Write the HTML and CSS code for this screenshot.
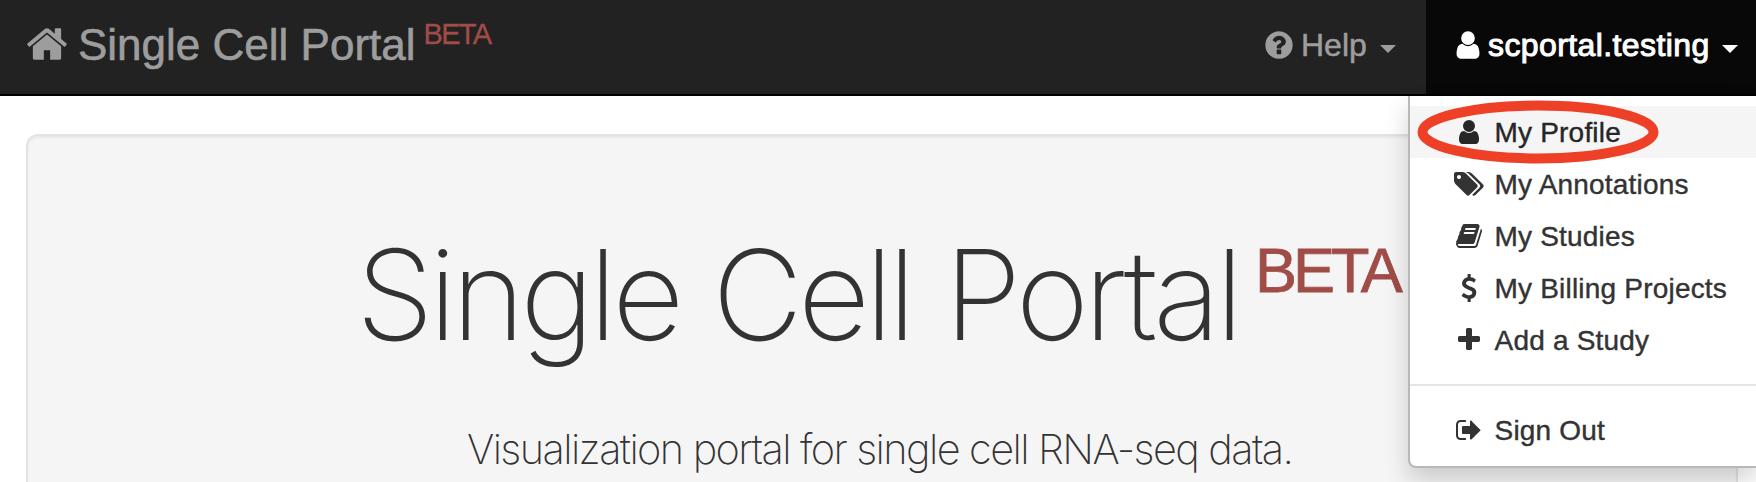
FILE: index.html
```html
<!DOCTYPE html>
<html lang="en">
<head>
<meta charset="utf-8">
<title>Single Cell Portal</title>
<link rel="stylesheet" href="styles.css">
</head>
<body>
<nav class="navbar">
  <a class="brand">
    <svg class="brand-icon" viewBox="0 0 1792 1792"><path d="M1472 992v480q0 26-19 45t-45 19h-384v-384h-256v384h-384q-26 0-45-19t-19-45v-480q0-1 .5-3t.5-3l575-474 575 474q1 2 1 6zm223-69l-62 74q-8 9-21 11h-3q-13 0-21-7l-692-577-692 577q-12 8-24 7-13-2-21-11l-62-74q-8-10-7-23.5t11-21.5l719-599q32-26 76-26t76 26l244 204v-195q0-14 9-23t23-9h192q14 0 23 9t9 23v408l219 182q10 8 11 21.5t-7 23.5z"/></svg>
    <span class="brand-name">Single Cell Portal</span>
    <span class="brand-beta">BETA</span>
  </a>
  <div class="nav-right">
    <a class="nav-item nav-help">
      <svg class="nav-icon" viewBox="0 0 1792 1792"><path d="M1024 1376v-192q0-14-9-23t-23-9h-192q-14 0-23 9t-9 23v192q0 14 9 23t23 9h192q14 0 23-9t9-23zm256-672q0-88-55.5-163t-138.5-116-170-41q-243 0-371 213-15 24 8 42l132 100q7 6 19 6 16 0 25-12 53-68 86-92 34-24 86-24 48 0 85.5 26t37.5 59q0 38-20 61t-68 45q-63 28-115.5 86.5t-52.5 125.5v36q0 14 9 23t23 9h192q14 0 23-9t9-23q0-19 21.5-49.5t54.5-49.5q32-18 49-28.5t46-35 44.5-48 28-60.5 12.5-81zm384 192q0 209-103 385.5t-279.5 279.5-385.5 103-385.5-103-279.5-279.5-103-385.5 103-385.5 279.5-279.5 385.5-103 385.5 103 279.5 279.5 103 385.5z"/></svg>
      <span class="help-text">Help</span>
      <span class="caret"></span>
    </a>
    <a class="nav-item nav-user">
      <svg class="nav-icon" viewBox="0 0 1792 1792"><path d="M1536 1399q0 109-62.5 187t-150.5 78h-854q-88 0-150.5-78t-62.5-187q0-85 8.5-160.5t31.5-152 58.5-131 94-89 134.5-34.5q131 128 313 128t313-128q76 0 134.5 34.5t94 89 58.5 131 31.5 152 8.5 160.5zm-256-887q0 159-112.5 271.5t-271.5 112.5-271.5-112.5-112.5-271.5 112.5-271.5 271.5-112.5 271.5 112.5 112.5 271.5z"/></svg>
      <span class="user-text">scportal.testing</span>
      <span class="caret"></span>
    </a>
  </div>
</nav>

<main class="well">
  <h1 class="title"><span class="title-name">Single Cell Portal</span><span class="title-beta">BETA</span></h1>
  <p class="subtitle">Visualization portal for single cell RNA-seq data.</p>
</main>

<div class="menu">
  <a class="menu-item active"><svg class="menu-icon" viewBox="0 0 1792 1792"><path d="M1536 1399q0 109-62.5 187t-150.5 78h-854q-88 0-150.5-78t-62.5-187q0-85 8.5-160.5t31.5-152 58.5-131 94-89 134.5-34.5q131 128 313 128t313-128q76 0 134.5 34.5t94 89 58.5 131 31.5 152 8.5 160.5zm-256-887q0 159-112.5 271.5t-271.5 112.5-271.5-112.5-112.5-271.5 112.5-271.5 271.5-112.5 271.5 112.5 112.5 271.5z"/></svg><span class="menu-text">My Profile</span></a>
  <a class="menu-item"><svg class="menu-icon wide" viewBox="0 0 1920 1792"><path d="M448 448q0-53-37.5-90.5t-90.5-37.5-90.5 37.5-37.5 90.5 37.5 90.5 90.5 37.5 90.5-37.5 37.5-90.5zm1067 576q0 53-37 90l-491 492q-39 37-91 37-53 0-90-37l-715-716q-38-37-64.5-101t-26.5-117v-416q0-52 38-90t90-38h416q53 0 117 26.5t102 64.5l715 714q37 39 37 91zm384 0q0 53-37 90l-491 492q-39 37-91 37-36 0-59-14t-53-45l470-470q37-37 37-90 0-52-37-91l-715-714q-38-38-102-64.5t-117-26.5h224q53 0 117 26.5t102 64.5l715 714q37 39 37 91z"/></svg><span class="menu-text">My Annotations</span></a>
  <a class="menu-item"><svg class="menu-icon" viewBox="0 0 1792 1792"><path d="M1703 478q40 57 18 129l-275 906q-19 64-76.5 107.5t-122.5 43.5h-923q-77 0-148.5-53.5t-99.5-131.5q-24-67-2-127 0-4 3-27t4-37q1-8-3-21.5t-3-19.5q2-11 8-21t16.5-23.5 16.5-23.5q23-38 45-91.5t30-91.5q3-10 .5-30t-.5-28q3-11 17-28t17-23q21-36 42-92t25-90q1-9-2.5-32t.5-28q4-13 22-30.5t22-22.5q19-26 42.5-84.5t27.5-96.5q1-8-3-25.5t-2-26.5q2-8 9-18t18-23 17-21q8-12 16.5-30.5t15-35 16-36 19.5-32 26.5-23.5 36-11.5 47.5 5.5l-1 3q38-9 51-9h761q74 0 114 56t18 130l-274 906q-36 119-71.5 153.5t-128.5 34.5h-869q-27 0-38 15-11 16-1 43 24 70 144 70h923q29 0 56-15.5t35-41.5l300-987q7-22 5-57 38 15 59 43zm-1064 2q-4 13 2 22.5t20 9.5h608q13 0 25.5-9.5t16.5-22.5l21-64q4-13-2-22.5t-20-9.5h-608q-13 0-25.5 9.5t-16.5 22.5zm-83 256q-4 13 2 22.5t20 9.5h608q13 0 25.5-9.5t16.5-22.5l21-64q4-13-2-22.5t-20-9.5h-608q-13 0-25.5 9.5t-16.5 22.5z"/></svg><span class="menu-text">My Studies</span></a>
  <a class="menu-item"><svg class="menu-icon" viewBox="0 0 1792 1792"><path d="M1362 1185q0 153-99.5 263.5t-258.5 136.5v175q0 14-9 23t-23 9h-135q-13 0-22.5-9.5t-9.5-22.5v-175q-66-9-127.5-31t-101.5-44.5-74-48-46.5-37.5-17.5-18q-17-21-2-41l103-135q7-10 23-12 15-2 24 9l2 2q113 99 243 125 37 8 74 8 81 0 142.5-43t61.5-122q0-28-15-53t-33.5-42-58.5-37.5-66-32-80-32.5q-39-16-61.5-25t-61.5-26.5-62.5-31-56.5-35.5-53.5-42.5-43.5-49-35.5-58-21-66.5-8.5-78q0-138 98-242t255-134v-180q0-13 9.5-22.5t22.5-9.5h135q14 0 23 9t9 23v176q57 6 110.5 23t87 33.5 63.5 37.5 39 29 15 14q17 18 5 38l-81 146q-8 15-23 16-14 3-27-7-3-3-14.5-12t-39-26.5-58.5-32-74.5-26-85.5-11.5q-95 0-155 43t-60 111q0 26 8.5 48t29.5 41.5 39.5 33 56 31 60.5 27 70 27.5q53 20 81 31.5t76 35 75.5 42.5 62 50 53 63.5 31.5 76.5 13 94z"/></svg><span class="menu-text">My Billing Projects</span></a>
  <a class="menu-item"><svg class="menu-icon" viewBox="0 0 1792 1792"><path d="M1600 736v192q0 40-28 68t-68 28h-416v416q0 40-28 68t-68 28h-192q-40 0-68-28t-28-68v-416h-416q-40 0-68-28t-28-68v-192q0-40 28-68t68-28h416v-416q0-40 28-68t68-28h192q40 0 68 28t28 68v416h416q40 0 68 28t28 68z"/></svg><span class="menu-text">Add a Study</span></a>
  <div class="divider"></div>
  <a class="menu-item"><svg class="menu-icon" viewBox="0 0 1792 1792"><path d="M704 1440q0 4 1 20t.5 26.5-3 23.5-10 19.5-20.5 6.5h-320q-119 0-203.5-84.5t-84.5-203.5v-704q0-119 84.5-203.5t203.5-84.5h320q13 0 22.5 9.5t9.5 22.5q0 4 1 20t.5 26.5-3 23.5-10 19.5-20.5 6.5h-320q-66 0-113 47t-47 113v704q0 66 47 113t113 47h312l11.5 1 11.5 3 8 5.5 7 9 2 13.5zm928-544q0 26-19 45l-544 544q-19 19-45 19t-45-19-19-45v-288h-448q-26 0-45-19t-19-45v-384q0-26 19-45t45-19h448v-288q0-26 19-45t45-19 45 19 19 45l544 544q19 19 19 45z"/></svg><span class="menu-text">Sign Out</span></a>
  <svg class="marker" viewBox="0 0 242 64"><ellipse cx="121" cy="32" rx="115.5" ry="26.5"/></svg>
</div>
</body>
</html>
```

FILE: styles.css
```css
* { box-sizing: border-box; }
body {
  margin: 0;
  height: 482px;
  overflow: hidden;
  position: relative;
  background: #fff;
  color: #333;
  font-family: "Liberation Sans", Arial, sans-serif;
}
svg { display: block; flex: none; fill: currentColor; }
.navbar {
  display: flex;
  justify-content: space-between;
  height: 96px;
  background: #222;
  border-bottom: 2px solid #000;
  color: #9d9d9d;
  white-space: nowrap;
}
.brand { display: flex; height: 90px; padding-left: 25px; align-items: flex-start; }
.brand-icon { width: 44px; height: 44px; margin-top: 22px; }
.brand-name { margin-left: 9px; font-size: 44px; line-height: 90px; -webkit-text-stroke: 0.6px currentColor; }
.brand-beta {
  margin-left: 8px;
  font-size: 29px;
  line-height: 68px;
  letter-spacing: -1.7px;
  color: #a04c47;
  -webkit-text-stroke: 0.3px currentColor;
}
.nav-right { display: flex; width: 494px; }
.nav-item { display: flex; align-items: center; height: 94px; padding-bottom: 4px; font-size: 32px; line-height: 90px; }
.nav-help { width: 164px; padding-left: 1px; }
.nav-user { width: 330px; padding-left: 26px; background: #080808; color: #fff; }
.nav-icon { width: 32px; height: 32px; }
.help-text { margin-left: 6px; width: 79px; -webkit-text-stroke: 0.5px currentColor; }
.user-text { margin-left: 4px; width: 234px; letter-spacing: 0.4px; -webkit-text-stroke: 1px currentColor; }
.caret { border: 8px solid transparent; border-top-color: currentColor; border-bottom: 0; margin-top: 7px; }

.well {
  width: 1712px;
  height: 348px;
  margin: 38px 0 0 26px;
  padding-top: 100px;
  background: #f5f5f5;
  border: 2px solid #e3e3e3;
  border-bottom: 0;
  border-radius: 12px 12px 0 0;
  box-shadow: inset 0 2px 2px rgba(0, 0, 0, 0.05);
  white-space: nowrap;
}
.title {
  display: flex;
  align-items: flex-start;
  margin: 0;
  padding-left: 328px;
  font-family: Inter, sans-serif;
  font-weight: 200;
}
.title-name { width: 899px; font-size: 125px; line-height: 117px; letter-spacing: -5px; word-spacing: 3px; }
.title-beta {
  font-family: "Liberation Sans", Arial, sans-serif;
  font-size: 63px;
  font-weight: 400;
  line-height: 69px;
  letter-spacing: -4px;
  color: #a04c47;
  -webkit-text-stroke: 0.8px currentColor;
}
.subtitle {
  margin: 66px 0 0 439px;
  font-family: Inter, sans-serif;
  font-size: 41.5px;
  font-weight: 200;
  line-height: 60px;
  letter-spacing: -1.6px;
}

.menu {
  position: absolute;
  top: 96px;
  left: 1408px;
  width: 348px;
  height: 372px;
  padding: 10px 0;
  background: #fff;
  border: 2px solid #b8b8b8;
  border-top: 0;
  border-right: 0;
  border-radius: 0 0 0 8px;
  box-shadow: 0 12px 24px rgba(0, 0, 0, 0.175);
  white-space: nowrap;
}
.menu-item {
  display: flex;
  align-items: center;
  height: 52px;
  padding-left: 44.5px;
  font-size: 28px;
  line-height: 52px;
}
.menu-item.active { background: #f5f5f5; color: #262626; }
.menu-icon { width: 28px; height: 28px; }
.menu-icon.wide { width: 30px; margin: 0 -1px; }
.menu-text { margin-left: 12px; padding-top: 1px; letter-spacing: 0.2px; -webkit-text-stroke: 0.4px currentColor; }
.divider { height: 2px; margin: 18px 0; background: #e5e5e5; }
.marker { position: absolute; left: 7px; top: 4px; width: 242px; height: 64px; }
.marker ellipse { fill: none; stroke: #ee4026; stroke-width: 10; }
```
